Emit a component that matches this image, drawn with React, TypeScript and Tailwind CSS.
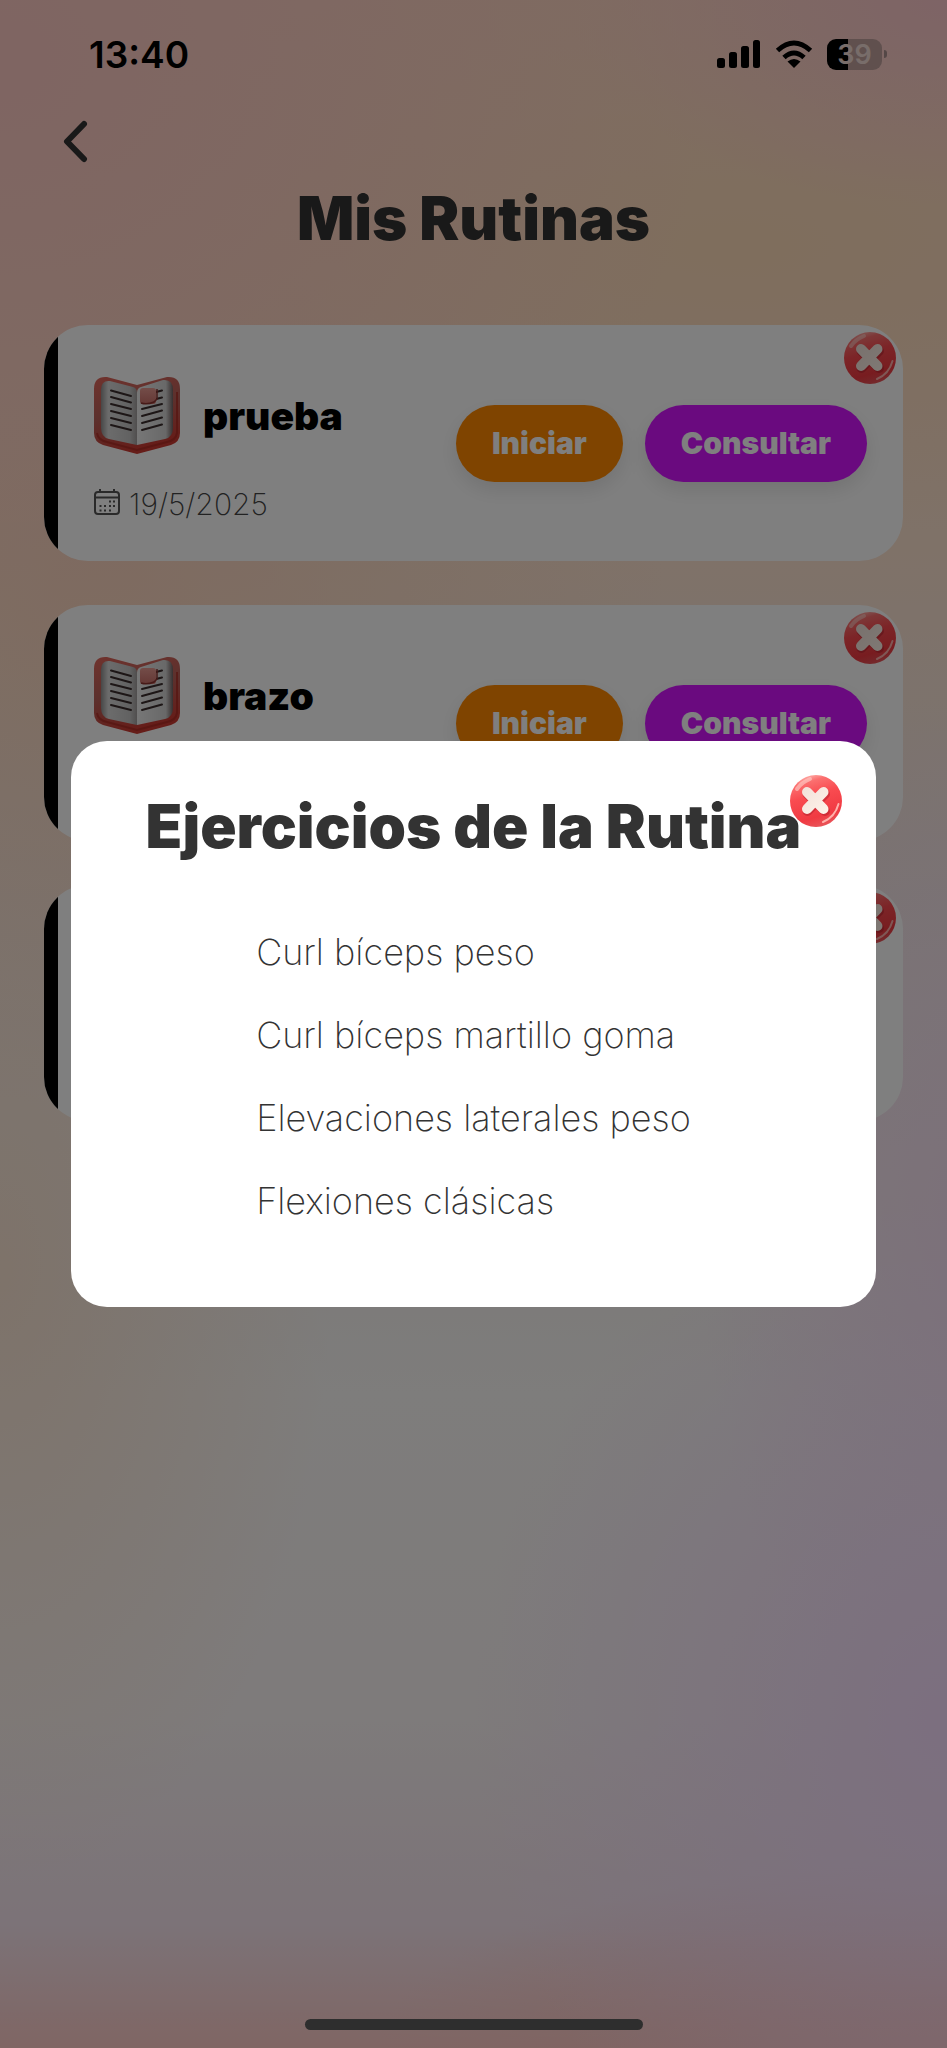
import React from "react";

type Routine = { id: number; name?: string; date?: string };

const routines: Routine[] = [
  { id: 1, name: "prueba", date: "19/5/2025" },
  { id: 2, name: "brazo" },
  { id: 3 },
];

const exercises = [
  "Curl bíceps peso",
  "Curl bíceps martillo goma",
  "Elevaciones laterales peso",
  "Flexiones clásicas",
];

function DeleteIcon({ id }: { id: string }) {
  return (
    <svg viewBox="0 0 54 54" className="h-[54px] w-[54px]" aria-hidden="true">
      <defs>
        <linearGradient id={`${id}-disc`} x1="0.3" y1="0" x2="0.6" y2="1">
          <stop offset="0" stopColor="#ffb3ad" />
          <stop offset="0.14" stopColor="#fb6f6f" />
          <stop offset="0.4" stopColor="#f94b50" />
          <stop offset="0.8" stopColor="#f03a42" />
          <stop offset="1" stopColor="#e8555a" />
        </linearGradient>
        <linearGradient id={`${id}-cross`} gradientUnits="userSpaceOnUse" x1="14" y1="14" x2="40" y2="40">
          <stop offset="0" stopColor="#f2e2da" />
          <stop offset="1" stopColor="#fff3ea" />
        </linearGradient>
      </defs>
      <circle cx="27" cy="27" r="26" fill={`url(#${id}-disc)`} />
      <path d="M8 15Q13 8 21 5" fill="none" stroke="#ffd0ca" strokeWidth="4" strokeLinecap="round" opacity="0.6" />
      <path d="M34 48Q46 43 49.500 30" fill="none" stroke="#ffb0aa" strokeWidth="2" strokeLinecap="round" />
      <path d="M18.500 20L36 37M36 20L18.500 37" stroke="#b9222f" strokeWidth="10" strokeLinecap="round" opacity="0.55" />
      <path d="M18 18L34.500 35M34.500 18L18 35" stroke={`url(#${id}-cross)`} strokeWidth="10" strokeLinecap="round" />
    </svg>
  );
}

function BookIcon({ id }: { id: string }) {
  return (
    <svg viewBox="0 0 88 80" className="h-20 w-[88px] shrink-0" aria-hidden="true">
      <defs>
        <linearGradient id={`${id}-cover`} x1="0" y1="0" x2="0.3" y2="1">
          <stop offset="0" stopColor="#e0655a" />
          <stop offset="0.5" stopColor="#b9625b" />
          <stop offset="1" stopColor="#cc3a32" />
        </linearGradient>
        <linearGradient id={`${id}-left`} x1="0" y1="0" x2="1" y2="0">
          <stop offset="0" stopColor="#8f8f8f" />
          <stop offset="0.2" stopColor="#d8d8d8" />
          <stop offset="0.8" stopColor="#c4c4c4" />
          <stop offset="1" stopColor="#a09c9c" />
        </linearGradient>
        <linearGradient id={`${id}-right`} x1="0" y1="0" x2="1" y2="0">
          <stop offset="0" stopColor="#eeeeee" />
          <stop offset="0.8" stopColor="#d2d2d2" />
          <stop offset="1" stopColor="#6f6060" />
        </linearGradient>
        <linearGradient id={`${id}-mark`} x1="0" y1="0" x2="0" y2="1">
          <stop offset="0" stopColor="#e89a92" />
          <stop offset="1" stopColor="#c9706a" />
        </linearGradient>
      </defs>
      <path d="M1 13Q1 0 14 1L44 9L74 1Q87 0 87 13V57Q87 66 78 69L44 78L10 69Q1 66 1 57Z" fill={`url(#${id}-cover)`} />
      <path d="M4 57Q5 64 14 66L44 74L74 66Q83 64 84 57V16" fill="none" stroke="#a92922" strokeWidth="2" opacity="0.7" />
      <path d="M8 14Q8 4 17 5L40 11Q44 12 44 17V69L16 63Q8 61 8 52Z" fill={`url(#${id}-left)`} />
      <path d="M44 17Q44 12 48 11L70 4Q80 3 80 14V52Q80 61 72 63L44 69Z" fill={`url(#${id}-right)`} />
      <path d="M18 14.500L38 20M18 21L38 26.500M18 28L38 33M18 35L38 40M18 42L38 47M18 49L38 54M49 33L69 28M49 40L69 34.500M49 47L69 41.500M49 54L69 48.500M63 16L69 14.500M63 23L69 21.500" fill="none" stroke="#3a2c2c" strokeWidth="2" strokeLinecap="round" />
      <rect x="47" y="12" width="16" height="16" rx="3" fill={`url(#${id}-mark)`} />
      <path d="M48 27Q54 29 61 26L64 23V13" fill="none" stroke="#8e3530" strokeWidth="1.500" />
    </svg>
  );
}

function CalendarIcon() {
  return (
    <svg viewBox="0 0 28 28" className="mb-1 h-7 w-7" fill="none" stroke="#555555" aria-hidden="true">
      <rect x="2" y="4" width="24" height="22" rx="3" strokeWidth="2" />
      <path d="M2 9.500H26M7 1V4M21 1V4" strokeWidth="2" />
      <path d="M16 13.500H18M20 13.500H22M6.500 18H8.500M11 18H13M16 18H18M20 18H22M6.500 22.500H8.500M11 22.500H13M16 22.500H18" strokeWidth="2" />
    </svg>
  );
}

function StatusBar() {
  return (
    <div className="flex h-[108px] items-center justify-between pl-[89px] pr-[60px] text-black">
      <span className="text-[37px] font-semibold leading-none">13:40</span>
      <div className="flex items-center gap-[14px]">
        <svg viewBox="0 0 44 28" className="h-7 w-11" aria-label="Cobertura">
          <rect x="0" y="18" width="8" height="10" rx="2.500" />
          <rect x="12" y="12" width="8" height="16" rx="2.500" />
          <rect x="24" y="6" width="8" height="22" rx="2.500" />
          <rect x="36" y="0" width="7" height="28" rx="2.500" />
        </svg>
        <svg viewBox="0 0 38 28" className="h-7 w-[38px]" fill="none" stroke="black" strokeWidth="5" aria-label="Wifi">
          <path d="M2.500 10.500Q19 -4.500 35.500 10.500" />
          <path d="M9 17.500Q19 8.500 29 17.500" />
          <path d="M19 28L12.500 21.500Q19 16.500 25.500 21.500Z" fill="black" stroke="none" />
        </svg>
        <div className="flex items-center gap-[2px]">
          <div className="flex h-[31px] w-[55px] items-center justify-center rounded-[9px] bg-linear-to-r from-black from-38% to-[#c0a19d] to-38%">
            <span className="text-[27px] font-semibold leading-none text-[#f0dad4]">39</span>
          </div>
          <div className="h-2 w-[3px] rounded-r-full bg-[#a88e8c]" />
        </div>
      </div>
    </div>
  );
}

function RoutineCard({ id, name, date }: Routine) {
  return (
    <li className="relative flex h-[236px] overflow-hidden rounded-[44px] bg-white">
      <div className="w-[14px] shrink-0 bg-black" />
      <div className="flex flex-1 items-center justify-between pl-[35px] pr-9">
        <div className="flex flex-col gap-[30px] pt-3">
          <div className="flex items-center gap-[22px]">
            <BookIcon id={`book-${id}`} />
            {name && <h2 className="text-[39px] font-black leading-[48px] text-black">{name}</h2>}
          </div>
          <p className="flex h-9 items-center gap-2 text-[30px] font-extralight leading-9 text-[#444444]">
            <CalendarIcon />
            {date}
          </p>
        </div>
        <div className="flex gap-[22px]">
          <button className="h-[77px] rounded-full bg-[#ff8800] px-9 text-[30px] font-black text-white shadow-[0_8px_20px_rgba(0,0,0,0.1)]">
            Iniciar
          </button>
          <button className="h-[77px] rounded-full bg-[#d414ff] px-9 text-[30px] font-black text-white shadow-[0_8px_20px_rgba(0,0,0,0.1)]">
            Consultar
          </button>
        </div>
      </div>
      <button aria-label="Eliminar rutina" className="absolute right-[6px] top-[6px]">
        <DeleteIcon id={`del-${id}`} />
      </button>
    </li>
  );
}

export default function App() {
  return (
    <div className="relative flex min-h-screen flex-col bg-[radial-gradient(40%_10%_at_100%_0%,#fcc8cc_0%,transparent_100%),radial-gradient(75%_30%_at_0%_3%,#ffcac4_0%,transparent_100%),radial-gradient(80%_14%_at_78%_12%,#ffdcba_0%,transparent_100%),radial-gradient(60%_26%_at_10%_28%,#fcd8c0_0%,transparent_100%),radial-gradient(35%_30%_at_0%_62%,#fce6d4_0%,transparent_100%),radial-gradient(50%_26%_at_100%_84%,#f8deff_0%,transparent_100%),radial-gradient(30%_26%_at_104%_60%,#f8e0f4_0%,transparent_100%),radial-gradient(60%_9%_at_100%_100%,#ffc4be_0%,transparent_100%),linear-gradient(180deg,#ffd8c4_0%,#ffe4d0_26%,#f4e8e4_44%,#fcfaf8_68%,#fcf6f6_84%,#f8e6f0_94%,#ffccc8_100%)] font-['Inter','Liberation_Sans',sans-serif]">
      <StatusBar />
      <main className="flex flex-1 flex-col px-11">
        <a href="#inicio" aria-label="Volver" className="w-fit pl-[19px] pt-[12px]">
          <svg viewBox="0 0 26 44" className="h-11 w-[26px]" fill="none" stroke="#333333" strokeWidth="6" strokeLinecap="round" strokeLinejoin="round">
            <path d="M21 4L4 21.500L21 39" />
          </svg>
        </a>
        <h1 className="mt-[18px] text-center text-[60px] font-black leading-[72px] text-[#333333]">Mis Rutinas</h1>
        <ul className="mt-[71px] flex flex-col gap-11">
          {routines.map((routine) => (
            <RoutineCard key={routine.id} {...routine} />
          ))}
        </ul>
      </main>
      <div className="absolute inset-0 flex items-center justify-center bg-black/50 px-[71px]">
        <section role="dialog" aria-modal="true" aria-labelledby="dialog-title" className="relative flex w-full flex-col items-center rounded-[36px] bg-white pb-16 pt-[49px]">
          <h2 id="dialog-title" className="text-[60px] font-black leading-[72px] text-[#333333]">
            Ejercicios de la Rutina
          </h2>
          <ul className="mt-[49px] text-[36px] font-extralight text-[#333333]">
            {exercises.map((exercise) => (
              <li key={exercise} className="leading-[83px]">{exercise}</li>
            ))}
          </ul>
          <button aria-label="Cerrar" className="absolute right-[33px] top-[33px]">
            <DeleteIcon id="close" />
          </button>
        </section>
      </div>
      <div className="absolute inset-x-0 bottom-[18px] flex justify-center">
        <div className="h-[11px] w-[338px] rounded-full bg-[#2e2e2e]" />
      </div>
    </div>
  );
}
